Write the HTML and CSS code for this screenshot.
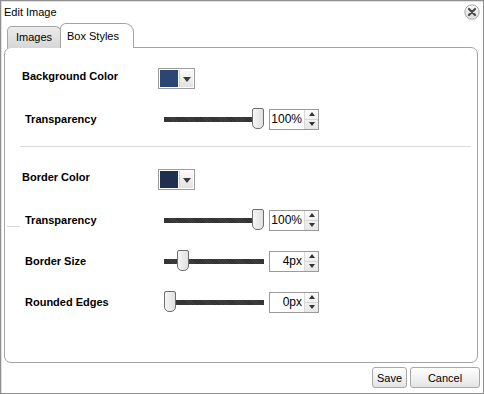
FILE: index.html
```html
<!DOCTYPE html>
<html lang="en">
<head>
    <meta charset="UTF-8">
    <meta name="viewport" content="width=device-width, initial-scale=1.0">
    <title>Edit Image</title>
    <link rel="stylesheet" href="styles.css">
</head>
<body>

<div class="dialog">
    <div class="titlebar">
        <span class="title">Edit Image</span>
        <svg class="close" width="16" height="16" viewBox="0 0 16 16">
            <defs>
                <linearGradient id="closeBg" x1="0" y1="0" x2="0" y2="1">
                    <stop offset="0" stop-color="#fdfdfd"/>
                    <stop offset="1" stop-color="#dcdcdc"/>
                </linearGradient>
            </defs>
            <circle cx="8" cy="8" r="7.2" fill="url(#closeBg)" stroke="#a8a8a8"/>
            <path d="M5 5 L11 11 M11 5 L5 11" stroke="#4a4a4a" stroke-width="2.2" stroke-linecap="round"/>
        </svg>
    </div>

    <div class="tabs">
        <div class="tab">Images</div>
        <div class="tab active">Box Styles</div>
    </div>

    <div class="panel">
        <div class="section">
            <div class="row row-color">
                <span class="label">Background Color</span>
                <span class="picker"><span class="swatch swatch-bg"></span><span class="drop"></span></span>
            </div>
            <div class="row row-slider">
                <span class="label">Transparency</span>
                <span class="slider"><span class="track"></span><span class="thumb" style="left: 88px"></span></span>
                <span class="spin"><span class="value">100%</span><span class="arrows"><span class="up"></span><span class="down"></span></span></span>
            </div>
        </div>

        <div class="sep"></div>

        <div class="section section-border">
            <div class="row row-color">
                <span class="label">Border Color</span>
                <span class="picker"><span class="swatch swatch-border"></span><span class="drop"></span></span>
            </div>
            <div class="row row-slider row-stub">
                <span class="stub"></span>
                <span class="label">Transparency</span>
                <span class="slider"><span class="track"></span><span class="thumb" style="left: 88px"></span></span>
                <span class="spin"><span class="value">100%</span><span class="arrows"><span class="up"></span><span class="down"></span></span></span>
            </div>
            <div class="row row-slider">
                <span class="label">Border Size</span>
                <span class="slider"><span class="track"></span><span class="thumb" style="left: 13px"></span></span>
                <span class="spin"><span class="value">4px</span><span class="arrows"><span class="up"></span><span class="down"></span></span></span>
            </div>
            <div class="row row-slider">
                <span class="label">Rounded Edges</span>
                <span class="slider"><span class="track"></span><span class="thumb" style="left: 0px"></span></span>
                <span class="spin"><span class="value">0px</span><span class="arrows"><span class="up"></span><span class="down"></span></span></span>
            </div>
        </div>
    </div>

    <div class="footer">
        <button class="btn btn-save">Save</button>
        <button class="btn btn-cancel">Cancel</button>
    </div>
</div>

</body>
</html>
```

FILE: styles.css
```css
body {
    margin: 0;
    padding: 0;
    background-color: #fff;
    font-family: "Liberation Sans", Arial, sans-serif;
    font-size: 11px;
    color: #000;
}
.dialog {
    width: 484px;
    height: 394px;
    box-sizing: border-box;
    border: 1px solid #8e8e8e;
    box-shadow: inset 1px 1px 0 #e2e2e2;
    padding: 0 3px;
    display: flex;
    flex-direction: column;
    background-color: #fff;
}
.titlebar {
    height: 22px;
    display: flex;
    align-items: center;
    justify-content: space-between;
}
.title {
    line-height: 20px;
}
.close {
    display: block;
}
.tabs {
    height: 25px;
    display: flex;
    align-items: flex-end;
    padding-left: 3px;
    margin-bottom: -1px;
    position: relative;
    z-index: 1;
}
.tab {
    box-sizing: border-box;
    height: 22px;
    width: 55px;
    padding-left: 8px;
    line-height: 21px;
    border: 1px solid #a4a4a4;
    border-bottom: none;
    border-radius: 5px 7px 0 0;
    background: linear-gradient(#ececec, #d6d6d6);
}
.tab.active {
    height: 25px;
    width: 74px;
    margin-left: -2px;
    padding-left: 6px;
    line-height: 24px;
    background: #fff;
    border-radius: 6px 9px 0 0;
}
.panel {
    box-sizing: border-box;
    height: 316px;
    width: 474px;
    border: 1px solid #a4a4a4;
    border-radius: 7px;
    padding-top: 19px;
}
.section {
    display: flex;
    flex-direction: column;
    gap: 19px;
}
.row {
    height: 22px;
    display: flex;
    align-items: center;
}
.label {
    font-weight: bold;
}
.row-color {
    padding-left: 17px;
}
.row-color .label {
    width: 136px;
    margin-bottom: 5px;
}
.row-slider {
    padding-left: 20px;
}
.row-slider .label {
    width: 139px;
    margin-bottom: 1px;
}
.row-stub {
    padding-left: 2px;
}
.stub {
    width: 13px;
    height: 1px;
    background-color: #d6d6d6;
    align-self: flex-end;
    margin-bottom: 4px;
    margin-right: 5px;
}
.sep {
    height: 1px;
    background-color: #dcdcdc;
    margin: 16px 6px 21px 15px;
}
.picker {
    box-sizing: border-box;
    width: 37px;
    height: 21px;
    border: 1px solid #9c9c9c;
    padding: 1px;
    display: flex;
}
.swatch {
    width: 18px;
    height: 17px;
}
.swatch-bg {
    background-color: #2b4575;
}
.swatch-border {
    background-color: #1e2f4f;
}
.drop {
    flex: 1;
    margin-left: 1px;
    border-left: 1px solid #d2d2d2;
    background: linear-gradient(#fafafa, #e2e2e2);
    display: flex;
    align-items: center;
    justify-content: center;
}
.drop::after {
    content: "";
    border-left: 4px solid transparent;
    border-right: 4px solid transparent;
    border-top: 5px solid #3a3a3a;
    margin-top: 2px;
}
.slider {
    position: relative;
    width: 100px;
    height: 22px;
    display: flex;
    align-items: center;
}
.track {
    width: 100%;
    height: 5px;
    background: repeating-linear-gradient(45deg, #303030 0 1px, #3f3f3f 1px 2px);
}
.thumb {
    position: absolute;
    top: 0;
    box-sizing: border-box;
    width: 12px;
    height: 21px;
    border: 1px solid #6e6e6e;
    border-radius: 2px 2px 5px 5px;
    background: linear-gradient(90deg, #f6f6f6, #e0e0e0);
}
.spin {
    box-sizing: border-box;
    width: 50px;
    height: 21px;
    margin-left: 5px;
    border: 1px solid #9a9a9a;
    display: flex;
    font-size: 12px;
}
.value {
    flex: 1;
    text-align: right;
    padding-right: 2px;
    line-height: 19px;
}
.arrows {
    width: 13px;
    display: flex;
    flex-direction: column;
    border-left: 1px solid #dadada;
    background: linear-gradient(#fbfbfb, #e6e6e6);
}
.arrows span {
    flex: 1;
    display: flex;
    align-items: center;
    justify-content: center;
}
.arrows .up {
    border-bottom: 1px solid #d6d6d6;
}
.arrows .up::after {
    content: "";
    border-left: 3px solid transparent;
    border-right: 3px solid transparent;
    border-bottom: 4px solid #333;
}
.arrows .down::after {
    content: "";
    border-left: 3px solid transparent;
    border-right: 3px solid transparent;
    border-top: 4px solid #333;
}
.footer {
    display: flex;
    justify-content: flex-end;
    gap: 3px;
    padding-top: 4px;
}
.btn {
    box-sizing: border-box;
    height: 21px;
    padding: 0;
    font-family: "Liberation Sans", Arial, sans-serif;
    font-size: 11px;
    color: #000;
    border: 1px solid #a8a8a8;
    border-radius: 3px;
    background: linear-gradient(#ffffff, #e4e4e4);
}
.btn-save {
    width: 35px;
}
.btn-cancel {
    width: 70px;
}
```
